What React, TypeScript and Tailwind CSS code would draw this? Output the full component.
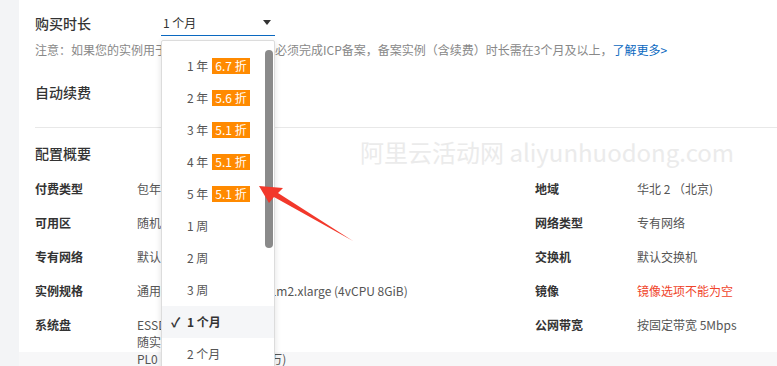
type Row = { label: string; value: React.ReactNode; rlabel?: string; rvalue?: React.ReactNode };

const rows: Row[] = [
  { label: "付费类型", value: "包年包月", rlabel: "地域", rvalue: "华北 2 （北京)" },
  { label: "可用区", value: "随机分配", rlabel: "网络类型", rvalue: "专有网络" },
  { label: "专有网络", value: "默认专有网络", rlabel: "交换机", rvalue: "默认交换机" },
  {
    label: "实例规格",
    value: "通用算力型 u1 / ecs.u1-c1m2.xlarge (4vCPU 8GiB)",
    rlabel: "镜像",
    rvalue: <span className="text-[#f0452b]">镜像选项不能为空</span>,
  },
  {
    label: "系统盘",
    value: (
      <div className="leading-[17px]">
        <div>ESSD云盘 40GiB</div>
        <div>随实例释放</div>
        <div>PL0 (单盘IOPS性能上限1万)</div>
      </div>
    ),
    rlabel: "公网带宽",
    rvalue: "按固定带宽 5Mbps",
  },
];

const options = [
  { text: "1 年", off: "6.7 折" },
  { text: "2 年", off: "5.6 折" },
  { text: "3 年", off: "5.1 折" },
  { text: "4 年", off: "5.1 折" },
  { text: "5 年", off: "5.1 折" },
  { text: "1 周" },
  { text: "2 周" },
  { text: "3 周" },
  { text: "1 个月", selected: true },
  { text: "2 个月" },
];

function Dropdown() {
  return (
    <div className="absolute left-[142px] top-[40px] h-[340px] w-[114px] overflow-hidden rounded-[2px] border border-[#dcdcdc] bg-white pt-[9px] shadow-[0_2px_6px_rgba(0,0,0,0.12)]">
      {options.map((o) => (
        <div
          key={o.text}
          className={`relative flex h-[32px] items-center pl-[24px] text-[12px] ${
            o.selected ? "bg-[#f5f6f8] font-bold text-[#333]" : "text-[#555]"
          }`}
        >
          {o.selected && <span className="absolute left-[9px] text-[13px] font-bold text-[#333]">✓</span>}
          <span className="pl-[1px]">{o.text}</span>
          {o.off && (
            <span className="ml-[4px] flex h-[16px] items-center bg-[#ff8a00] px-[3px] text-[12px] text-white">
              {o.off}
            </span>
          )}
        </div>
      ))}
      <div className="absolute right-[1px] top-[9px] h-[198px] w-[8px] rounded-full bg-[#8a8a8a]" />
    </div>
  );
}

function Arrow() {
  return (
    <svg className="absolute left-0 top-0" width="777" height="366" viewBox="0 0 777 366" aria-hidden>
      <polygon points="259,186 283,188 278,193 353,241 274,197 269,203" fill="#f2382b" />
    </svg>
  );
}

export default function App() {
  return (
    <div
      className="relative flex h-[366px] w-[777px] overflow-hidden bg-[#f3f4f6] pl-[19px]"
      style={{ fontFamily: '"Noto Sans CJK SC", "Liberation Sans", sans-serif' }}
    >
      <div className="relative h-full flex-1 bg-[linear-gradient(to_bottom,#ffffff_352px,#f7f7f8_352px)] pl-[16px] pt-[10px]">
        <div className="flex h-[26px] items-center">
          <span className="w-[126px] text-[14px] font-medium text-[#333]">购买时长</span>
          <div className="flex h-[26px] w-[114px] items-center justify-between border-b-[1.5px] border-[#0a68c0] pl-[2px] pr-[4px] text-[12px] text-[#333]">
            <span>1 个月</span>
            <span className="h-0 w-0 border-x-[4px] border-t-[5px] border-x-transparent border-t-[#333]" />
          </div>
        </div>

        <div className="mt-[5px] text-[12px] leading-[18px] text-[#888]">
          注意：如果您的实例用于中国内地网站服务，必须完成ICP备案，备案实例（含续费）时长需在3个月及以上，
          <span className="text-[#0a68c0]">了解更多&gt;</span>
        </div>

        <div className="mt-[23px] text-[14px] font-medium leading-[20px] text-[#333]">自动续费</div>

        <div className="mt-[25px] border-t border-[#e8e8e8]" />

        <div className="mt-[15px] text-[14px] font-medium leading-[20px] text-[#333]">配置概要</div>

        <div className="mt-[17px] grid grid-cols-[102px_398px_102px_1fr] gap-y-[16px] text-[12px] leading-[18px]">
          {rows.map((r) => (
            <div key={r.label} className="contents">
              <span className="font-bold text-[#333]">{r.label}</span>
              <div className="text-[#555]">{r.value}</div>
              <span className="font-bold text-[#333]">{r.rlabel}</span>
              <div className="text-[#555]">{r.rvalue}</div>
            </div>
          ))}
        </div>

        <div className="pointer-events-none absolute left-[341px] top-[136px] text-[24px] leading-[32px] text-[#ebebeb]">
          阿里云活动网 aliyunhuodong.com
        </div>

        <Dropdown />
      </div>
      <Arrow />
    </div>
  );
}
